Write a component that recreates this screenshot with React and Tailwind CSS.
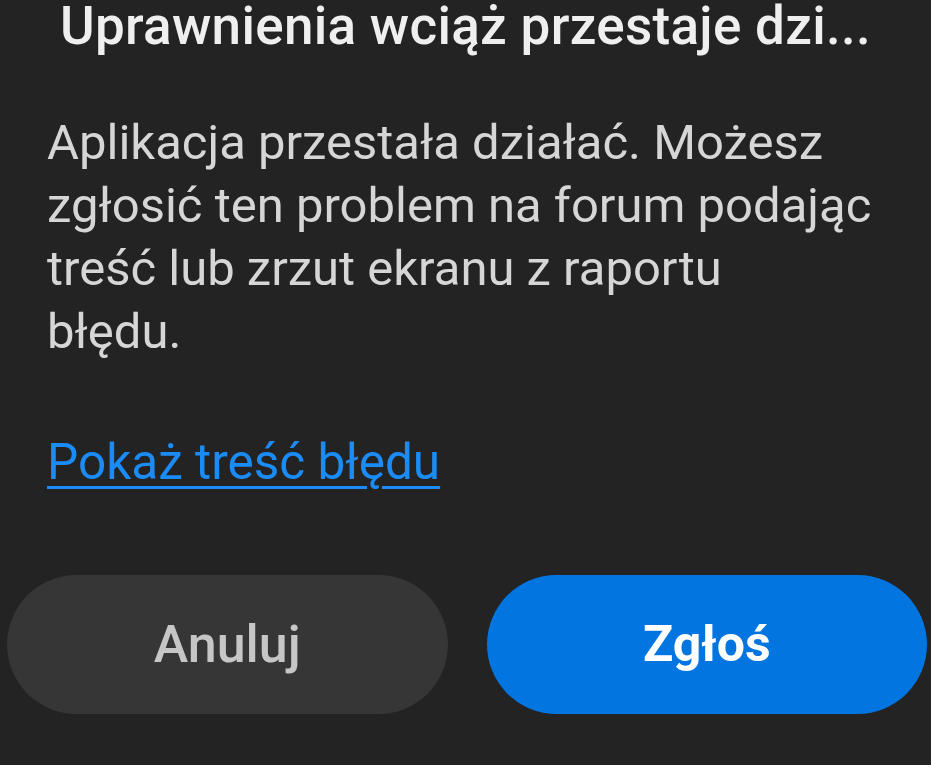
import React from 'react'

export default function App() {
  return (
    <div
      className="w-[931px] h-[765px] bg-[#232323] overflow-hidden flex flex-col"
      style={{ fontFamily: 'Roboto, "Noto Sans", sans-serif' }}
    >
      <h1 className="pt-[4px] text-center text-[53px] leading-[44px] font-medium tracking-[0.3px] text-[#efefef] whitespace-nowrap">
        Uprawnienia wciąż przestaje dzi...
      </h1>

      <p className="pl-[47px] pr-[40px] mt-[63px] text-[49px] leading-[63px] text-[#d6d6d6]">
        Aplikacja przestała działać. Możesz zgłosić ten problem na forum podając treść lub zrzut ekranu z raportu
        <br />
        błędu.
      </p>

      <div className="px-[47px] mt-[71px] leading-[56px]">
        <a href="#" className="text-[49.5px] leading-[56px] text-[#1b8bf5] underline underline-offset-[7px] decoration-[3px]">
          Pokaż treść błędu
        </a>
      </div>

      <div className="flex gap-[39px] pl-[7px] pr-[4px] mt-[73px]">
        <button className="flex-1 h-[139px] rounded-full bg-[#363636] text-[#c6c6c6] text-[52px] font-medium">
          Anuluj
        </button>
        <button className="flex-1 h-[139px] rounded-full bg-[#0275e0] text-white text-[50px] font-bold">
          Zgłoś
        </button>
      </div>
    </div>
  )
}
